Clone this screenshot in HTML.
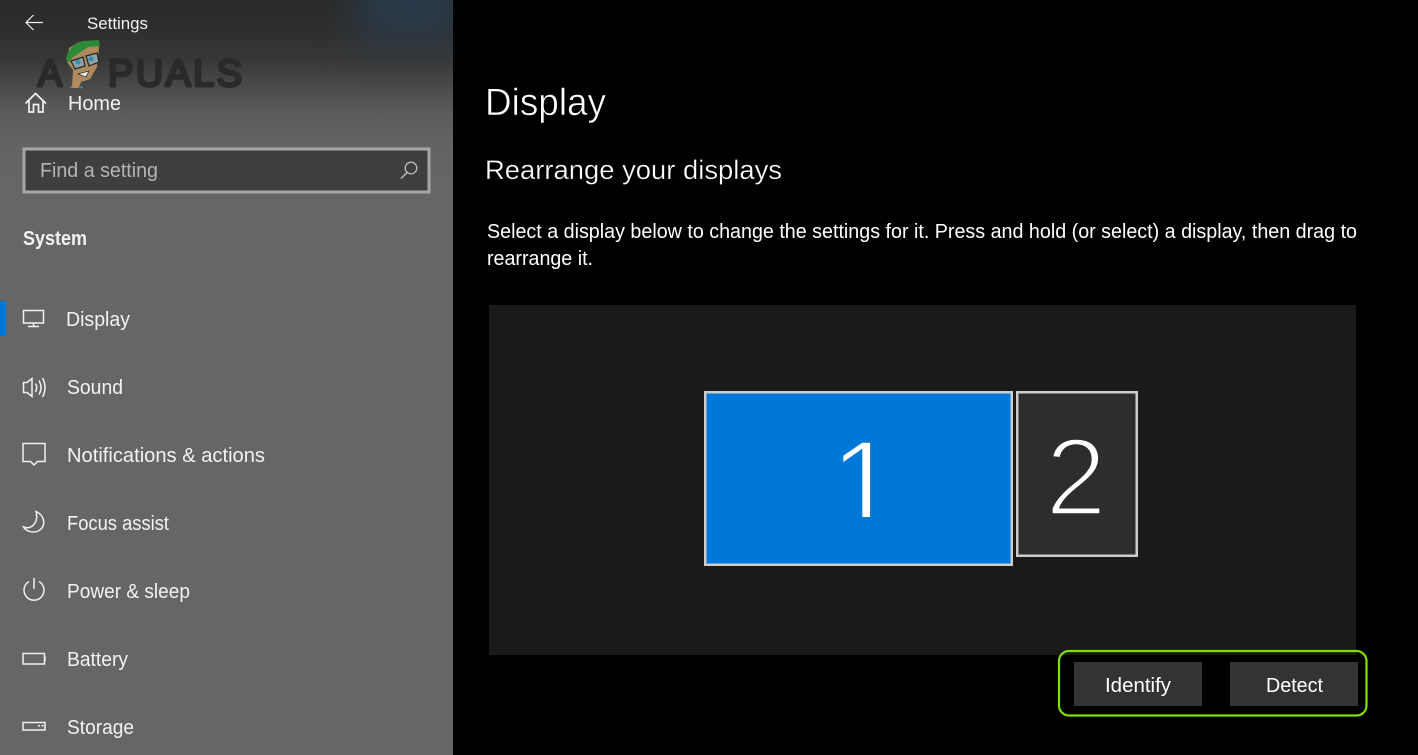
<!DOCTYPE html>
<html><head><meta charset="utf-8"><title>Settings</title>
<style>
html,body{margin:0;padding:0;width:1418px;height:755px;overflow:hidden;background:#000}
#side{position:absolute;left:0;top:0;width:453px;height:755px;background:#666;overflow:hidden}
#side .g{position:absolute;left:0;top:0;width:453px;height:190px;background:linear-gradient(180deg,#2a2a28 0,#2e2e2c 30px,#383837 60px,#4c4c4b 90px,#5c5c5b 115px,#636363 145px,#666 190px)}
#side .b{position:absolute;left:355px;top:-30px;width:110px;height:70px;background:#2a3f55;filter:blur(22px);opacity:.8}
svg{position:absolute;left:0;top:0}
text{font-family:"Liberation Sans",sans-serif;fill:#f2f2f2}
</style></head><body>
<div id="side"><div class="g"></div><div class="b"></div></div>
<svg width="1418" height="755" viewBox="0 0 1418 755" xmlns="http://www.w3.org/2000/svg">
<defs><clipPath id="c1"><rect x="830" y="420" width="60" height="97"/></clipPath></defs>
<!-- header -->
<path d="M43 22.500H26M33.500 15l-7.500 7.500 7.500 7.500" fill="none" stroke="#eee" stroke-width="1.200"/>
<text x="87" y="29" font-size="17" textLength="61" lengthAdjust="spacingAndGlyphs">Settings</text>

<!-- logo -->
<g stroke-width="3" stroke-linejoin="round">
<text x="38" y="86" font-size="38" style="fill:#2a2a2a;stroke:#2a2a2a;stroke-width:3" textLength="24" lengthAdjust="spacingAndGlyphs">A</text>
<text x="108" y="86" font-size="38" style="fill:#2a2a2a;stroke:#2a2a2a;stroke-width:3" textLength="134" lengthAdjust="spacing">PUALS</text>
</g>
<path d="M72 88l1-18-6-8 2-14 10-6 13-1 7 6-2 20-7 12-9 3-2 6z" fill="#b08a5e"/>
<path d="M66 60c1-10 9-18 18-19l15-1 1 6-12 1-7 5-8 5-5 6z" fill="#2d8a38"/>
<path d="M71 61l12-4 2 9-10 3zM86 56l11-3 2 9-10 4z" fill="#8ea2a8" stroke="#222" stroke-width="1.200"/>
<circle cx="78" cy="62" r="2.600" fill="#3d8fb0"/><circle cx="91" cy="59" r="2.600" fill="#3d8fb0"/>
<path d="M78 74l11-3-3 6z" fill="#eee" stroke="#333" stroke-width=".8"/>
<path d="M69 87l3-1v2zM80 86l3 1-2 2z" fill="#3a9ab5"/>

<!-- home -->
<path d="M25.500 103.500L35.500 93.500L46 103.500M29 100.500V112H33.500V104.500H38.500V112H43V100.500" fill="none" stroke="#f2f2f2" stroke-width="1.700"/>
<text x="68" y="110" font-size="20" textLength="53" lengthAdjust="spacingAndGlyphs">Home</text>

<!-- search -->
<rect x="24" y="149" width="405" height="43" fill="#3f3f3f" stroke="#a6a6a6" stroke-width="3"/>
<text x="40" y="177" font-size="20" style="fill:#b4b4b4" textLength="118" lengthAdjust="spacingAndGlyphs">Find a setting</text>
<circle cx="411" cy="168" r="5.800" fill="none" stroke="#bbb" stroke-width="1.300"/>
<path d="M407 172.500L401 178.500" stroke="#bbb" stroke-width="1.500"/>

<text x="23" y="245" font-size="20" font-weight="700" textLength="64" lengthAdjust="spacingAndGlyphs">System</text>

<!-- nav -->
<rect x="0" y="301" width="6" height="35" fill="#0078d7"/>
<g fill="none" stroke="#f0f0f0" stroke-width="1.500">
<path d="M23.500 310.500H43.500V323H23.500ZM33.500 323V326.500M28 326.500H39"/>
<path d="M23.500 382.500V392.500H27L32 396.500V378.500L27 382.500Z"/>
<path d="M35.500 383.500Q38 387.500 35.500 392M39 380.500Q43 387.500 39 394.500M42.500 378Q47.500 387.500 42.500 397"/>
<path d="M23 443.500H45V461.500H37.500L34 465L30.500 461.500H23Z"/>
<path d="M36 511.500C44 515 46 524 41 529C36.500 533.500 27 533 23.500 527C31 530 39 523 36 511.500Z"/>
<path d="M29 581.500A10 10 0 1 0 39 581.500M34 578V589"/>
<path d="M23 653.500H44.500V664H23ZM45 656.500V661"/>
<path d="M23 722.500H45V730H23Z"/>
</g>
<path d="M38 725h2v1.500h-2zM41.500 725h2v1.500h-2z" fill="#f0f0f0"/>
<text x="66" y="326" font-size="20" textLength="64" lengthAdjust="spacingAndGlyphs">Display</text>
<text x="67" y="394" font-size="20" textLength="56" lengthAdjust="spacingAndGlyphs">Sound</text>
<text x="67" y="462" font-size="20" textLength="198" lengthAdjust="spacingAndGlyphs">Notifications &amp; actions</text>
<text x="67" y="530" font-size="20" textLength="102" lengthAdjust="spacingAndGlyphs">Focus assist</text>
<text x="67" y="598" font-size="20" textLength="123" lengthAdjust="spacingAndGlyphs">Power &amp; sleep</text>
<text x="67" y="666" font-size="20" textLength="61" lengthAdjust="spacingAndGlyphs">Battery</text>
<text x="67" y="734" font-size="20" textLength="67" lengthAdjust="spacingAndGlyphs">Storage</text>

<!-- main -->
<text x="485" y="115" font-size="38" style="fill:#fff;stroke:#000;stroke-width:.6" textLength="121" lengthAdjust="spacingAndGlyphs">Display</text>
<text x="485" y="179" font-size="27" style="fill:#fff;stroke:#000;stroke-width:.3" textLength="297" lengthAdjust="spacingAndGlyphs">Rearrange your displays</text>
<text x="487" y="238" font-size="20" style="fill:#fff" textLength="870" lengthAdjust="spacingAndGlyphs">Select a display below to change the settings for it. Press and hold (or select) a display, then drag to</text>
<text x="487" y="265" font-size="20" style="fill:#fff" textLength="106" lengthAdjust="spacingAndGlyphs">rearrange it.</text>

<rect x="489" y="305" width="867" height="350" fill="#1a1a1a"/>
<rect x="705.250" y="392.250" width="306.500" height="172.500" fill="#0078d7" stroke="#cdcdcd" stroke-width="2.500"/>
<rect x="1017.250" y="392.250" width="119.500" height="163.500" fill="#2d2d2d" stroke="#cdcdcd" stroke-width="2.500"/>
<g clip-path="url(#c1)"><text x="864" y="525" font-size="122" text-anchor="middle" style="fill:#fff;stroke:#0078d7;stroke-width:3">1</text></g>
<text x="1076" y="515" font-size="110" text-anchor="middle" style="fill:#fff;stroke:#2d2d2d;stroke-width:3.500">2</text>

<rect x="1074" y="662" width="128" height="44" fill="#333"/>
<rect x="1230" y="662" width="128" height="44" fill="#333"/>
<text x="1105" y="692" font-size="20" style="fill:#fff" textLength="66" lengthAdjust="spacingAndGlyphs">Identify</text>
<text x="1266" y="692" font-size="20" style="fill:#fff" textLength="57" lengthAdjust="spacingAndGlyphs">Detect</text>
<rect x="1059" y="651" width="307.500" height="64.500" rx="10" fill="none" stroke="#7fe000" stroke-width="2.200"/>
</svg>
</body></html>
